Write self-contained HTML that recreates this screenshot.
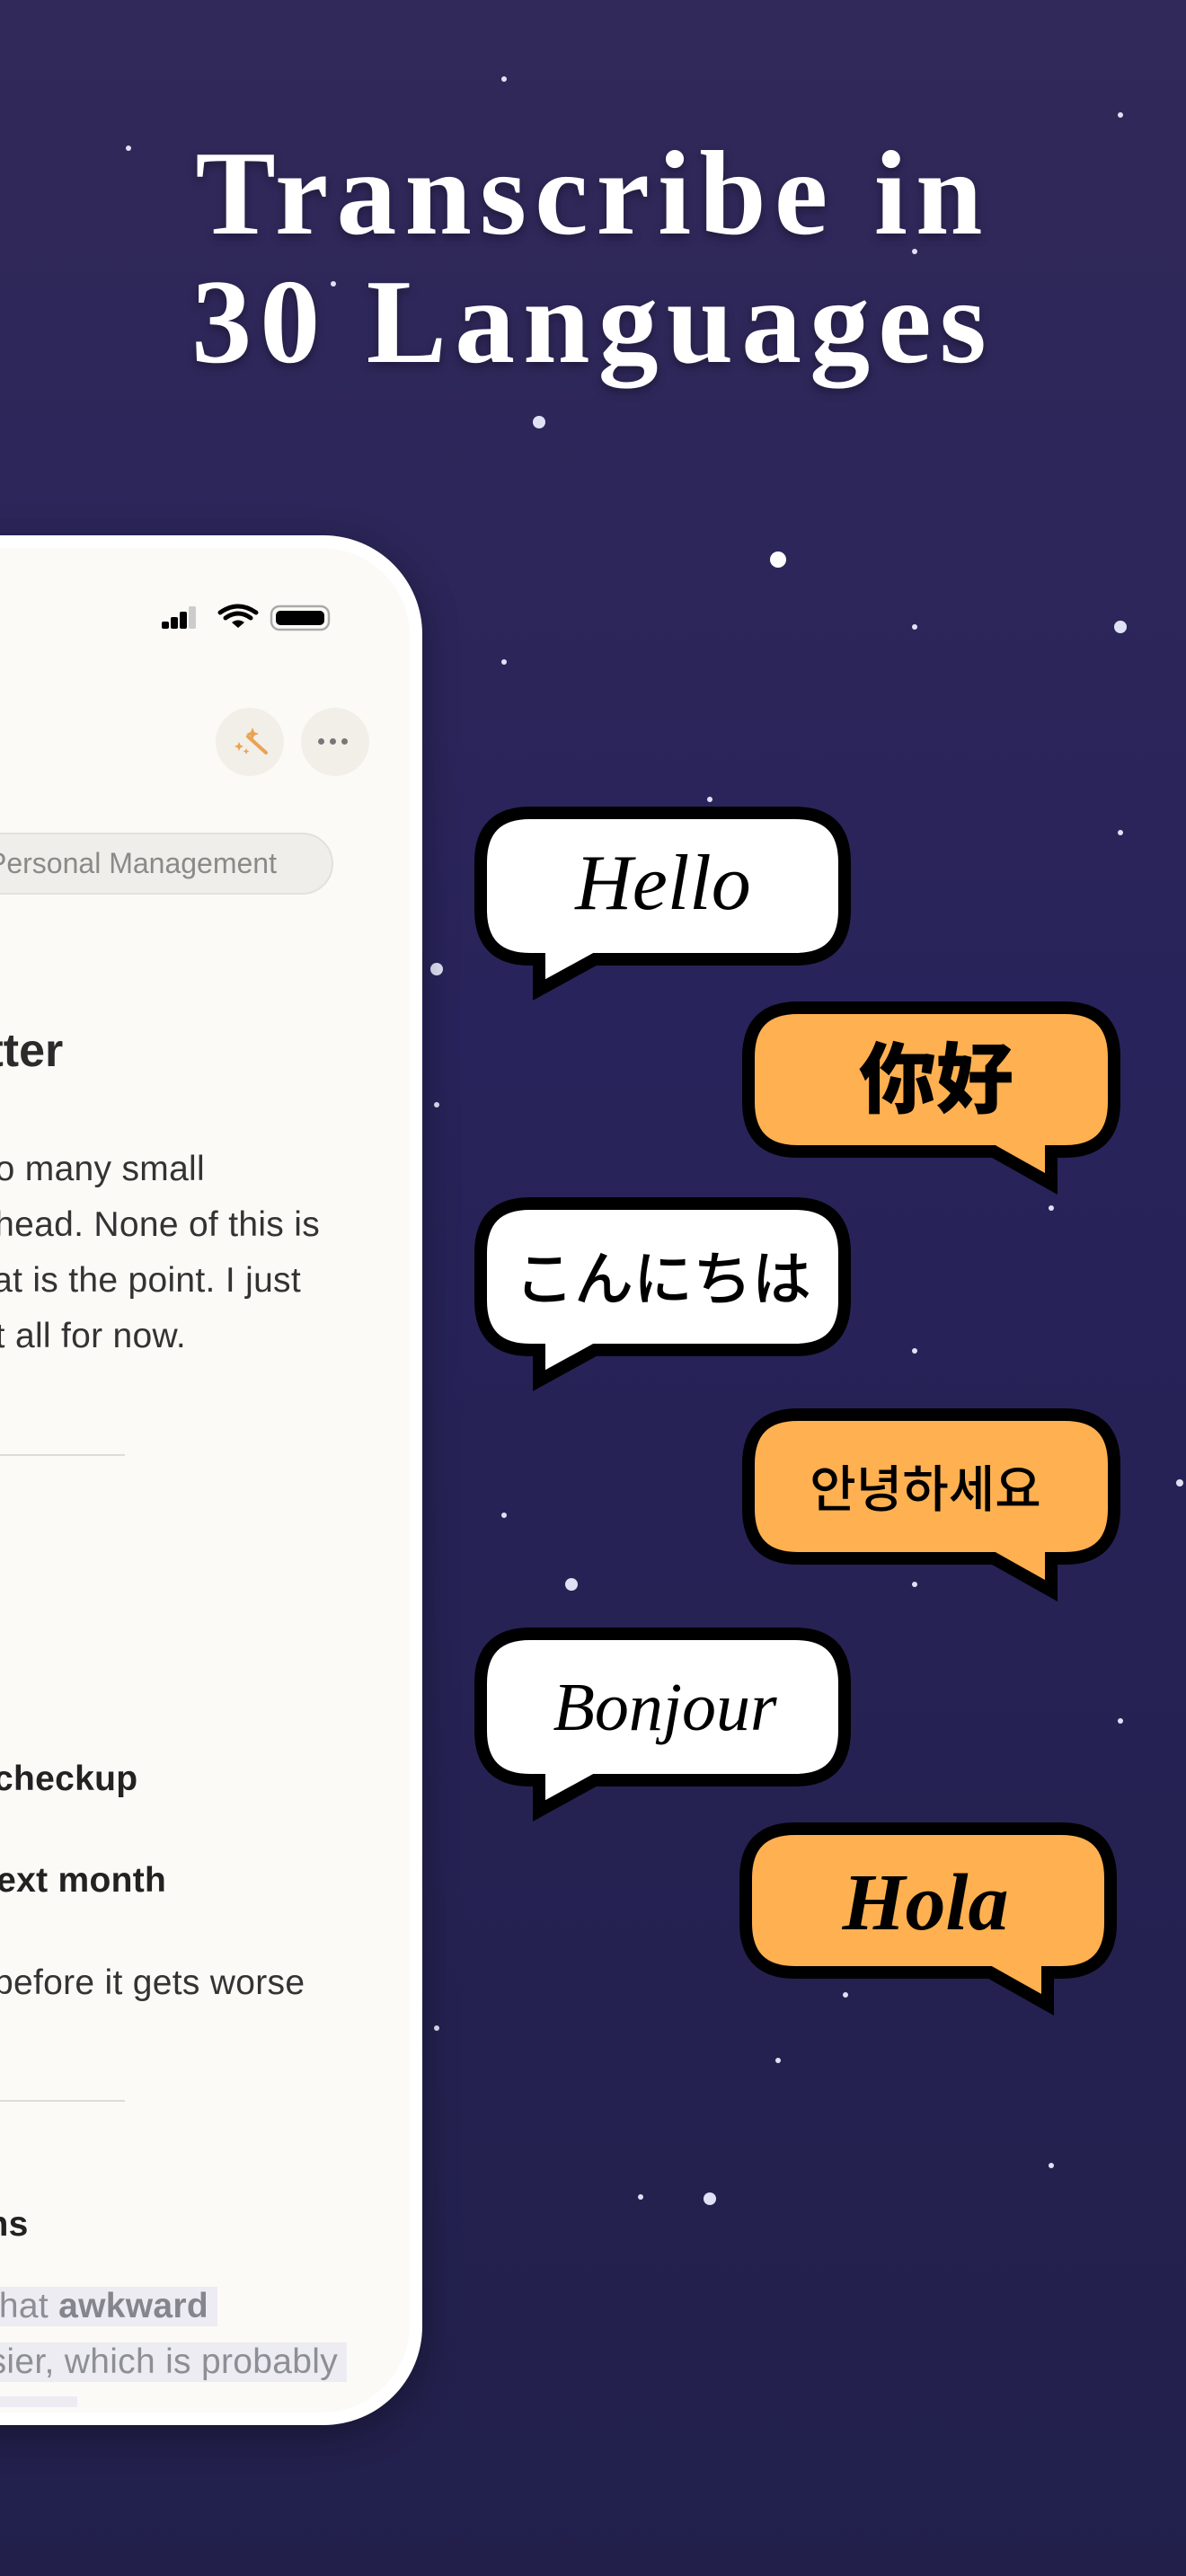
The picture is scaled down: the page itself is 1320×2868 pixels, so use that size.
<!DOCTYPE html>
<html><head><meta charset="utf-8"><style>
*{margin:0;padding:0;box-sizing:border-box}
body{width:1320px;height:2868px;overflow:hidden;background:linear-gradient(180deg,#312959 0%,#28235a 40%,#22204b 100%);position:relative;font-family:"Liberation Sans",sans-serif}
.title{position:absolute;left:0;width:1320px;text-align:center;color:#fff;font-family:"Liberation Serif","DejaVu Serif",serif;font-weight:bold;font-size:134px;letter-spacing:9px;line-height:1;text-shadow:0 4px 10px rgba(0,0,0,.35)}
.phone{position:absolute;left:-200px;top:596px;width:670px;height:2104px;background:#fff;border-radius:0 110px 110px 0;box-shadow:0 10px 40px rgba(0,0,0,.35);overflow:hidden}
.screen{position:absolute;left:0;top:14px;width:656px;height:2076px;background:#fbfaf6;border-radius:0 98px 98px 0;overflow:hidden}
.abs{position:absolute;white-space:nowrap}
.p{font-size:39px;color:#333;letter-spacing:.3px}
.b{font-size:39px;color:#222;font-weight:bold;letter-spacing:.3px}
.hl{background:#edecf3;color:#8e8e96;font-size:39px;letter-spacing:.3px}
.r{position:absolute;left:0;text-align:right;white-space:nowrap;overflow:hidden;font-size:39px;color:#333;letter-spacing:.3px}
</style></head><body>
<div class="title" style="top:148px">Transcribe in</div>
<div class="title" style="top:291px">30 Languages</div>

<svg width="1320" height="2868" style="position:absolute;left:0;top:0">
<g fill="#dfe2f5">
<circle cx="561" cy="88" r="3"/><circle cx="1247" cy="128" r="3"/><circle cx="143" cy="165" r="3"/><circle cx="1018" cy="280" r="3"/><circle cx="371" cy="316" r="3"/><circle cx="600" cy="470" r="7"/><circle cx="866" cy="623" r="9" fill="#fff"/><circle cx="1247" cy="698" r="7"/><circle cx="1018" cy="698" r="3"/><circle cx="561" cy="737" r="3"/><circle cx="790" cy="890" r="3"/><circle cx="1247" cy="927" r="3"/><circle cx="486" cy="1079" r="7"/><circle cx="486" cy="1230" r="3"/><circle cx="1170" cy="1345" r="3"/><circle cx="1018" cy="1504" r="3"/><circle cx="561" cy="1687" r="3"/><circle cx="636" cy="1764" r="7"/><circle cx="1018" cy="1764" r="3"/><circle cx="1313" cy="1651" r="4"/><circle cx="1247" cy="1916" r="3"/><circle cx="486" cy="2258" r="3"/><circle cx="941" cy="2221" r="3"/><circle cx="1170" cy="2411" r="3"/><circle cx="713" cy="2446" r="3"/><circle cx="790" cy="2448" r="7"/><circle cx="866" cy="2294" r="3"/>
</g>
<g stroke="#000" stroke-width="14" stroke-linejoin="miter">
<path fill="#fff" d="M590,905 H885 Q940,905 940,960 V1013 Q940,1068 885,1068 H662 L600,1102 V1068 H590 Q535,1068 535,1013 V960 Q535,905 590,905 Z"/>
<path fill="#ffb050" d="M888,1122 H1185 Q1240,1122 1240,1177 V1227 Q1240,1282 1185,1282 H1170 V1318 L1106,1282 H888 Q833,1282 833,1227 V1177 Q833,1122 888,1122 Z"/>
<path fill="#fff" d="M590,1340 H885 Q940,1340 940,1395 V1448 Q940,1503 885,1503 H662 L600,1537 V1503 H590 Q535,1503 535,1448 V1395 Q535,1340 590,1340 Z"/>
<path fill="#ffb050" d="M888,1575 H1185 Q1240,1575 1240,1630 V1680 Q1240,1735 1185,1735 H1170 V1771 L1106,1735 H888 Q833,1735 833,1680 V1630 Q833,1575 888,1575 Z"/>
<path fill="#fff" d="M590,1819 H885 Q940,1819 940,1874 V1927 Q940,1982 885,1982 H662 L600,2016 V1982 H590 Q535,1982 535,1927 V1874 Q535,1819 590,1819 Z"/>
<path fill="#ffb050" d="M885,2036 H1181 Q1236,2036 1236,2091 V2141 Q1236,2196 1181,2196 H1166 V2232 L1102,2196 H885 Q830,2196 830,2141 V2091 Q830,2036 885,2036 Z"/>
</g>
<g text-anchor="middle" fill="#000">
<text x="738" y="1012" font-family="Liberation Serif,serif" font-style="italic" font-size="88">Hello</text>
<text x="1042" y="1232" font-family="Noto Sans CJK SC,sans-serif" font-weight="900" font-size="86">你好</text>
<text x="738" y="1447" font-family="Noto Sans CJK JP,sans-serif" font-weight="500" font-size="66">こんにちは</text>
<text x="1030" y="1678" font-family="Noto Sans CJK KR,NanumGothic,sans-serif" font-weight="500" font-size="56">안녕하세요</text>
<text x="740" y="1926" font-family="Liberation Serif,serif" font-style="italic" font-size="76">Bonjour</text>
<text x="1030" y="2148" font-family="Liberation Serif,serif" font-style="italic" font-weight="bold" font-size="90">Hola</text>
</g>
</svg>

<div class="phone"><div class="screen">
<svg class="abs" style="left:370px;top:60px" width="200" height="40">
<g fill="#000"><rect x="10" y="22" width="8" height="8" rx="2"/><rect x="20" y="17" width="8" height="13" rx="2"/><rect x="30" y="11" width="8" height="19" rx="2"/><rect x="40" y="5" width="8" height="25" rx="2" fill="#ccc"/></g>
<path d="M75,12 Q95,-2 115,12 M81,18 Q95,8 109,18" stroke="#000" stroke-width="5" fill="none" stroke-linecap="round"/><path d="M88,23 L95,29 L102,23 Q95,18 88,23 Z" fill="#000"/>
<rect x="132" y="5" width="64" height="26" rx="9" fill="none" stroke="#aaa" stroke-width="2.5"/>
<rect x="137" y="10" width="54" height="16" rx="5" fill="#000"/>
</svg>
<div class="abs" style="left:440px;top:178px;width:76px;height:76px;border-radius:50%;background:#f2efe8"></div>
<svg class="abs" style="left:440px;top:178px" width="76" height="76"><path d="M36,32 L56,50" stroke="#e9a352" stroke-width="4" stroke-linecap="round"/><path d="M41,22 l2,5 5,2 -5,2 -2,5 -2,-5 -5,-2 5,-2z M26,38 l1.5,3.5 3.5,1.5 -3.5,1.5 -1.5,3.5 -1.5,-3.5 -3.5,-1.5 3.5,-1.5z M34,45 l1,2.5 2.5,1 -2.5,1 -1,2.5 -1,-2.5 -2.5,-1 2.5,-1z" fill="#e9a352"/></svg>
<div class="abs" style="left:535px;top:178px;width:76px;height:76px;border-radius:50%;background:#f2efe8"></div>
<div class="abs" style="left:554px;top:212px;font-size:0"><span style="display:inline-block;width:7px;height:7px;border-radius:50%;background:#777;margin-right:6px"></span><span style="display:inline-block;width:7px;height:7px;border-radius:50%;background:#777;margin-right:6px"></span><span style="display:inline-block;width:7px;height:7px;border-radius:50%;background:#777"></span></div>
<div class="abs" style="left:100px;top:317px;width:471px;height:69px;border-radius:35px;background:#efeeea;border:2px solid #e2e1dc"></div>
<div class="abs" style="left:186px;top:333px;font-size:32px;color:#8a8a88">Personal Management</div>
<div class="abs" style="left:120px;top:530px;font-size:52px;font-weight:bold;color:#2b2b2b">Better</div>
<div class="r" style="top:670px;width:428px">to many small</div>
<div class="r" style="top:732px;width:556px">my head. None of this is</div>
<div class="r" style="top:794px;width:535px">that is the point. I just</div>
<div class="r" style="top:856px;width:407px">it all for now.</div>
<div class="abs" style="left:0;top:1009px;width:339px;height:2px;background:#dedcd8"></div>
<div class="abs b" style="left:193px;top:1349px">checkup</div>
<div class="abs b" style="left:172px;top:1462px">next month</div>
<div class="abs p" style="left:193px;top:1576px">before it gets worse</div>
<div class="abs" style="left:0;top:1728px;width:339px;height:2px;background:#dedcd8"></div>
<div class="abs b" style="left:137px;top:1845px">tions</div>
<div class="r" style="top:1936px;width:442px;background:#edecf3;color:#8e8e96;padding-right:10px">that <b style="color:#85858e">awkward</b></div>
<div class="r" style="top:1998px;width:586px;background:#edecf3;color:#8e8e96;padding-right:10px">easier, which is probably</div>
<div class="abs" style="left:0;top:2058px;width:286px;height:12px;background:#edecf3"></div>
</div></div>
</body></html>
